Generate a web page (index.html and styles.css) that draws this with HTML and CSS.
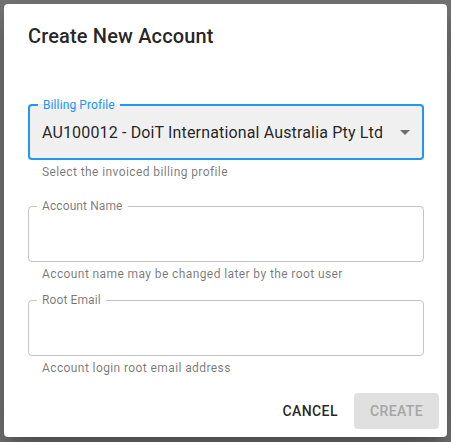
FILE: index.html
```html
<!DOCTYPE html>
<html lang="en">
<head>
<meta charset="utf-8">
<title>Create New Account</title>
<link rel="stylesheet" href="styles.css">
</head>
<body>
<div class="dialog">
  <h2 class="title">Create New Account</h2>
  <div class="content">
    <fieldset class="field field-billing">
      <legend>Billing Profile</legend>
      <div class="select">
        <span class="select-value">AU100012 - DoiT International Australia Pty Ltd</span>
        <svg class="arrow" width="24" height="24" viewBox="0 0 24 24"><path d="M7 10l5 5 5-5z"/></svg>
      </div>
    </fieldset>
    <p class="helper">Select the invoiced billing profile</p>

    <fieldset class="field field-name">
      <legend>Account Name</legend>
      <div class="input"></div>
    </fieldset>
    <p class="helper">Account name may be changed later by the root user</p>

    <fieldset class="field field-email">
      <legend>Root Email</legend>
      <div class="input"></div>
    </fieldset>
    <p class="helper">Account login root email address</p>
  </div>
  <div class="actions">
    <button class="btn btn-text">Cancel</button>
    <button class="btn btn-contained" disabled>Create</button>
  </div>
</div>
</body>
</html>
```

FILE: styles.css
```css
html, body {
  margin: 0;
  padding: 0;
}
body {
  background: #767676;
  font-family: Roboto, "Liberation Sans", sans-serif;
  width: 451px;
  height: 442px;
  overflow: hidden;
}
.dialog {
  margin: 4px;
  width: 443px;
  height: 433px;
  box-sizing: border-box;
  background: #ffffff;
  border-radius: 4px;
  display: flex;
  flex-direction: column;
  box-shadow: 0 11px 15px -7px rgba(0, 0, 0, 0.2),
              0 24px 38px 3px rgba(0, 0, 0, 0.14),
              0 9px 46px 8px rgba(0, 0, 0, 0.12);
}
.title {
  margin: 0;
  padding: 16px 24px;
  font-size: 20px;
  font-weight: 500;
  line-height: 32px;
  letter-spacing: 0.15px;
  color: rgba(0, 0, 0, 0.87);
}
.content {
  padding: 0 23px 0 24px;
}
.field {
  margin: 0;
  padding: 0 8px;
  min-width: 0;
  border: 1px solid rgba(0, 0, 0, 0.23);
  border-radius: 4px;
}
.field legend {
  padding: 0 5px;
  font-size: 12px;
  line-height: 13px;
  letter-spacing: 0.1px;
  color: rgba(0, 0, 0, 0.54);
}
.field-billing {
  margin-top: 30px;
  border: 2px solid #2196f3;
  background: #f0f0f0;
}
.field-billing legend {
  line-height: 14px;
  color: #2196f3;
}
.field-name {
  margin-top: 18px;
}
.field-email {
  margin-top: 10px;
}
.select {
  margin: 0 -8px;
  height: 40px;
  padding: 0 5px 6px 12px;
  display: flex;
  align-items: center;
  justify-content: space-between;
}
.select-value {
  font-size: 16px;
  letter-spacing: 0.15px;
  color: rgba(0, 0, 0, 0.87);
  white-space: nowrap;
}
.arrow {
  display: block;
  fill: rgba(0, 0, 0, 0.54);
}
.input {
  height: 48px;
}
.helper {
  margin: 2px 14px 0;
  font-size: 12px;
  line-height: 20px;
  letter-spacing: 0.4px;
  color: rgba(0, 0, 0, 0.54);
}
.actions {
  margin-top: auto;
  padding: 8px;
  display: flex;
  justify-content: flex-end;
  gap: 8px;
}
.btn {
  font-family: Roboto, "Liberation Sans", sans-serif;
  font-size: 14px;
  font-weight: 500;
  line-height: 24px;
  letter-spacing: 0.4px;
  text-transform: uppercase;
  border: 0;
  border-radius: 4px;
  background: transparent;
  cursor: pointer;
}
.btn-text {
  padding: 6px 8px;
  color: rgba(0, 0, 0, 0.87);
}
.btn-contained {
  padding: 6px 16px;
  background: #e0e0e0;
  color: #a6a6a6;
  cursor: default;
}
```
